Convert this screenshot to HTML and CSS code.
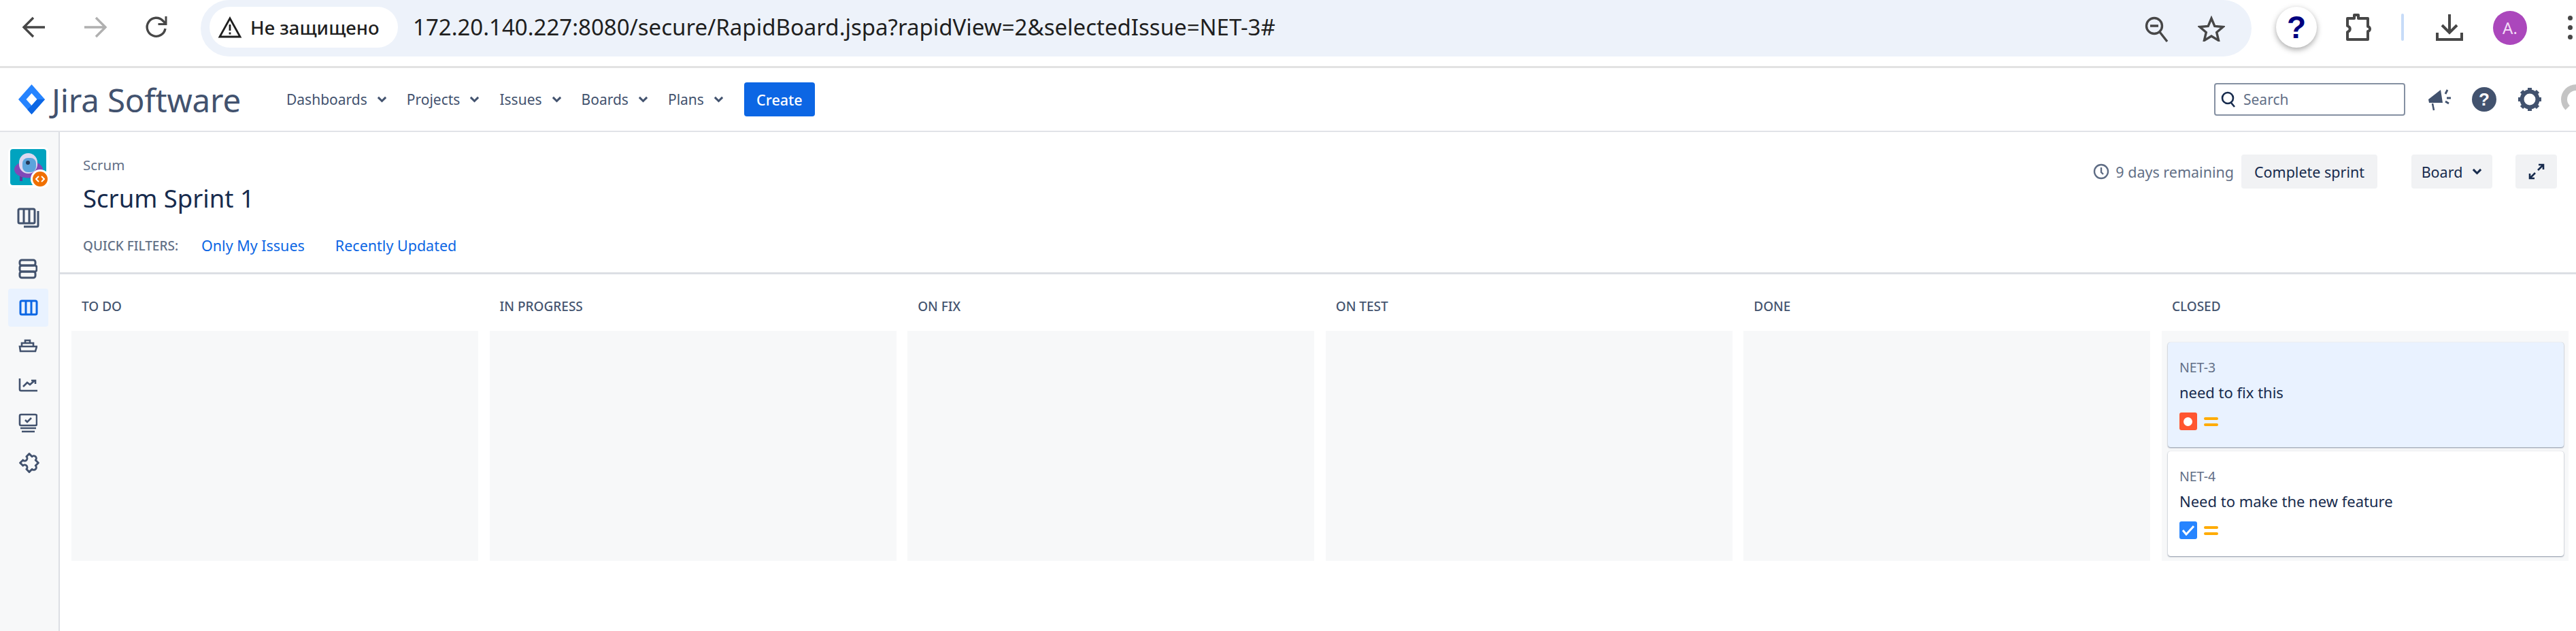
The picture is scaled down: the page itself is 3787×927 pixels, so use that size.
FILE: index.html
```html
<!DOCTYPE html>
<html lang="en">
<head>
    <meta charset="UTF-8">
    <meta name="viewport" content="width=device-width, initial-scale=1.0">
    <title>Scrum Sprint 1</title>
    <link rel="stylesheet" href="styles.css">
</head>
<body>

    <!-- browser toolbar -->
    <div class="chrome">
        <svg class="c-back" width="40" height="40" viewBox="0 0 40 40" fill="none" stroke="#474747" stroke-width="3.4"><path d="M36 20H6M19 6 5 20l14 14"/></svg>
        <svg class="c-forward" width="40" height="40" viewBox="0 0 40 40" fill="none" stroke="#b0b0b0" stroke-width="3.4"><path d="M4 20h30M21 6l14 14-14 14"/></svg>
        <svg class="c-reload" width="40" height="40" viewBox="0 0 40 40" fill="none" stroke="#474747" stroke-width="3.4"><path d="M33 22a13.500 13.500 0 1 1-3.500-11.500L34 15"/><path d="M34 4v11.500H22.500" stroke-width="3"/></svg>
        <div class="omnibox">
            <div class="security">
                <svg width="36" height="32" viewBox="0 0 36 32" fill="none" stroke="#1f1f1f" stroke-width="2.800"><path d="M18 3 3 30h30z"/><path d="M18 12v9M18 23.500v3"/></svg>
                <span>Не защищено</span>
            </div>
            <div class="url">172.20.140.227:8080/secure/RapidBoard.jspa?rapidView=2&amp;selectedIssue=NET-3#</div>
            <svg class="o-zoom" width="38" height="40" viewBox="0 0 38 40" fill="none" stroke="#474747" stroke-width="3.400"><circle cx="15" cy="15" r="11.500"/><path d="M9 15h12M23 24l11 14"/></svg>
            <svg class="o-star" width="40" height="38" viewBox="0 0 40 38" fill="none" stroke="#474747" stroke-width="3.400"><path d="m20 4 4.800 11.500 12.200 1-9.300 8 2.900 12L20 30l-10.600 6.500 2.900-12-9.300-8 12.200-1z"/></svg>
        </div>
        <div class="ext-help">?</div>
        <svg class="c-ext" width="40" height="42" viewBox="0 0 40 42" fill="none" stroke="#474747" stroke-width="4" stroke-linejoin="round"><path d="M3 8h10V3h6v5h14v12c4 0 4 7 0 7v12H3V28c5-2 5-7 0-9z"/></svg>
        <div class="c-divider"></div>
        <svg class="c-download" width="42" height="42" viewBox="0 0 42 42" fill="none" stroke="#474747" stroke-width="4"><path d="M21 1v26M10 17l11 11 11-11M3 28v10h36V28"/></svg>
        <div class="c-avatar">A.</div>
        <div class="c-dots"><i></i><i></i><i></i></div>
    </div>

    <!-- jira header -->
    <header class="topnav">
        <svg class="logo-mark" width="39" height="44" viewBox="0 0 39 44"><path d="M19.500 0 39 22 19.500 44 0 22z" fill="#2684ff"/><path d="M19.500 13 27.500 22l-8 9-8-9z" fill="#fff"/><path d="M27.500 22H39L19.500 44 13 36.700l6.500-5.700z" fill="#0c66e4"/></svg>
        <span class="logo-text">Jira Software</span>
        <nav class="menu">
            <a>Dashboards<svg class="chev" viewBox="0 0 12 8"><path d="m1.500 1.500 4.500 4.500 4.500-4.500"/></svg></a>
            <a>Projects<svg class="chev" viewBox="0 0 12 8"><path d="m1.500 1.500 4.500 4.500 4.500-4.500"/></svg></a>
            <a>Issues<svg class="chev" viewBox="0 0 12 8"><path d="m1.500 1.500 4.500 4.500 4.500-4.500"/></svg></a>
            <a>Boards<svg class="chev" viewBox="0 0 12 8"><path d="m1.500 1.500 4.500 4.500 4.500-4.500"/></svg></a>
            <a>Plans<svg class="chev" viewBox="0 0 12 8"><path d="m1.500 1.500 4.500 4.500 4.500-4.500"/></svg></a>
        </nav>
        <button class="create">Create</button>
        <div class="search">
            <svg width="22" height="26" viewBox="0 0 22 26" fill="none" stroke="#172b4d" stroke-width="2.600"><circle cx="10" cy="11" r="8"/><path d="m15 18 5 6"/></svg>
            <span>Search</span>
        </div>
        <svg class="h-mega" width="36" height="34" viewBox="0 0 36 34"><path d="M2 17 20 3l3 19H3z" fill="#42526e"/><path d="M8 23l2 10" stroke="#42526e" stroke-width="2.500"/><path d="M27 9l3-6M29 15h6M27 20l5 3" stroke="#42526e" stroke-width="2.800" fill="none"/></svg>
        <div class="h-help">?</div>
        <svg class="h-gear" width="36" height="36" viewBox="0 0 36 36" fill="none" stroke="#42526e"><circle cx="18" cy="18" r="11.500" stroke-width="6"/><path d="M18 1v6M18 29v6M1 18h6M29 18h6M6 6l4 4M26 26l4 4M6 30l4-4M26 10l4-4" stroke-width="6"/></svg>
        <div class="h-ring"></div>
    </header>

    <div class="page">
        <!-- project sidebar -->
        <aside class="sidebar">
            <div class="project-tile">
                <svg width="53" height="53" viewBox="0 0 53 53">
                    <rect width="53" height="53" rx="4" fill="#00a3bf"/>
                    <path d="M14 40h4v7h-4z" fill="#5e3a9e"/>
                    <ellipse cx="27" cy="30" rx="21" ry="12.500" fill="#8049b8"/>
                    <rect x="13" y="6" width="27" height="30" rx="13.500" fill="#ddd8f0"/>
                    <rect x="18" y="13" width="20" height="21" rx="8" fill="#5ba4dc"/>
                    <circle cx="26" cy="20" r="3" fill="#253858"/>
                </svg>
                <span class="project-badge">
                    <svg width="14" height="10" viewBox="0 0 14 10" fill="none" stroke="#fff" stroke-width="2"><path d="M5 1 1 5l4 4M9 1l4 4-4 4"/></svg>
                </span>
            </div>

            <svg class="side-icon i-stack" width="34" height="30" viewBox="0 0 34 30" fill="none" stroke="#42526e" stroke-width="3"><rect x="2" y="2" width="24" height="21" rx="2"/><path d="M10 2v21M18 2v21"/><path d="M31 5v21a2 2 0 0 1-2 2H10"/></svg>
            <svg class="side-icon i-backlog" width="28" height="30" viewBox="0 0 28 30" fill="none" stroke="#42526e" stroke-width="3"><rect x="2" y="2" width="23" height="8" rx="3"/><rect x="2" y="10" width="25" height="9" rx="3"/><rect x="2" y="19" width="23" height="9" rx="3"/></svg>
            <div class="side-active">
                <svg width="28" height="24" viewBox="0 0 28 24" fill="none" stroke="#0c66e4" stroke-width="3"><rect x="2" y="2" width="24" height="20" rx="2"/><path d="M10 2v20M18 2v20"/></svg>
            </div>
            <svg class="side-icon i-ship" width="28" height="20" viewBox="0 0 28 20" fill="none" stroke="#42526e" stroke-width="2.600"><path d="M2 11h25l-2 7H3z"/><path d="M5 11V6h17v5M10 6V2h7v4"/></svg>
            <svg class="side-icon i-chart" width="28" height="20" viewBox="0 0 28 20" fill="none" stroke="#42526e" stroke-width="2.600"><path d="M2 0v16a2 2 0 0 0 2 2h24"/><path d="m7 12 6-6 4 3 7-6M19 3h6v5"/></svg>
            <svg class="side-icon i-check" width="28" height="29" viewBox="0 0 28 29" fill="none" stroke="#42526e" stroke-width="2.600"><rect x="2" y="2" width="25" height="16" rx="2"/><path d="m10 10 3 3 6-6M3 22h23M5 27h19"/></svg>
            <svg class="side-icon i-puzzle" width="30" height="30" viewBox="-15 -15 30 30" fill="none" stroke="#42526e" stroke-width="2.800" stroke-linejoin="round"><path transform="rotate(45) scale(1.05)" d="M-9-9h5.500a3.500 3.500 0 1 1 7 0H9v5.500a3.500 3.500 0 1 1 0 7V9H3.500a3.500 3.500 0 1 0-7 0H-9V3.500a3.500 3.500 0 1 0 0-7z"/></svg>
        </aside>

        <main class="content">
            <section class="board-head">
                <div class="head-top">
                    <div>
                        <div class="crumb">Scrum</div>
                        <h1>Scrum Sprint 1</h1>
                    </div>
                    <div class="head-actions">
                        <svg width="24" height="24" viewBox="0 0 24 24" fill="none" stroke="#5e6c84" stroke-width="2.400"><circle cx="12" cy="12" r="10"/><path d="M12 6v7l3 3"/></svg>
                        <span class="remaining">9 days remaining</span>
                        <button class="btn btn-complete">Complete sprint</button>
                        <button class="btn btn-board">Board<svg class="chev dark" viewBox="0 0 12 8"><path d="m1.500 1.500 4.500 4.500 4.500-4.500"/></svg></button>
                        <button class="btn btn-expand">
                            <svg width="24" height="24" viewBox="0 0 24 24" fill="none" stroke="#172b4d" stroke-width="2.600"><path d="m14 10 8-8M15 2h7v7M10 14l-8 8M2 15v7h7"/></svg>
                        </button>
                    </div>
                </div>
                <div class="filters">
                    <span class="filters-label">QUICK FILTERS:</span>
                    <a>Only My Issues</a>
                    <a>Recently Updated</a>
                </div>
            </section>

            <section class="board">
                <div class="col-title">TO DO</div>
                <div class="col-title">IN PROGRESS</div>
                <div class="col-title">ON FIX</div>
                <div class="col-title">ON TEST</div>
                <div class="col-title">DONE</div>
                <div class="col-title">CLOSED</div>

                <div class="col"></div>
                <div class="col"></div>
                <div class="col"></div>
                <div class="col"></div>
                <div class="col"></div>
                <div class="col">
                    <article class="card selected">
                        <div class="card-key">NET-3</div>
                        <div class="card-summary">need to fix this</div>
                        <div class="card-meta">
                            <span class="type bug"><i></i></span>
                            <span class="prio"><i></i><i></i></span>
                        </div>
                    </article>
                    <article class="card">
                        <div class="card-key">NET-4</div>
                        <div class="card-summary">Need to make the new feature</div>
                        <div class="card-meta">
                            <span class="type task"><svg width="20" height="16" viewBox="0 0 20 16" fill="none" stroke="#fff" stroke-width="3"><path d="m2 8 5 6L18 2"/></svg></span>
                            <span class="prio"><i></i><i></i></span>
                        </div>
                    </article>
                </div>
            </section>
        </main>
    </div>

</body>
</html>
```

FILE: styles.css
```css
* { box-sizing: border-box; }
html, body { height: 100%; }
body {
    margin: 0;
    overflow: hidden;
    background: #fff;
    color: #172b4d;
    font-family: "Noto Sans", "Open Sans", sans-serif;
    display: flex;
    flex-direction: column;
}
button { font-family: inherit; border: none; cursor: pointer; }

/* browser toolbar */
.chrome {
    height: 100px;
    flex: none;
    display: flex;
    align-items: flex-start;
    background: #fff;
    border-bottom: 3px solid #e2e2e2;
}
.chrome > svg, .chrome > div { flex: none; }
.c-back { margin: 20px 0 0 30px; }
.c-forward { margin: 20px 0 0 50px; }
.c-reload { margin: 20px 0 0 50px; }
.omnibox {
    width: 3015px;
    height: 83px;
    margin-left: 45px;
    padding: 10px 0 0 13px;
    background: #edf2fa;
    border-radius: 42px;
    display: flex;
    align-items: flex-start;
}
.security {
    flex: none;
    width: 277px;
    height: 60px;
    padding-left: 12px;
    background: #fff;
    border-radius: 30px;
    display: flex;
    align-items: center;
    gap: 12px;
    font-size: 27.500px;
    font-weight: 500;
    color: #1f1f1f;
    white-space: nowrap;
}
.url {
    flex: none;
    width: 2545px;
    margin-left: 22px;
    font-size: 33px;
    line-height: 60px;
    color: #1f1f1f;
    white-space: nowrap;
}
.o-zoom { margin: 13px 0 0 0; flex: none; }
.o-star { margin: 13px 0 0 41px; flex: none; }
.ext-help {
    width: 60px;
    height: 60px;
    margin: 10px 0 0 36px;
    border-radius: 50%;
    background: #fff;
    box-shadow: 0 3px 8px rgba(0, 0, 0, .35);
    color: #00007f;
    font: bold 46px/60px "Liberation Sans", sans-serif;
    text-align: center;
}
.c-ext { margin: 19px 0 0 42px; }
.c-divider {
    width: 4px;
    height: 40px;
    margin: 20px 0 0 42px;
    background: #c7dcf8;
    border-radius: 2px;
}
.c-download { margin: 20px 0 0 46px; }
.c-avatar {
    width: 50px;
    height: 50px;
    margin: 16px 0 0 43px;
    border-radius: 50%;
    background: #ab47bc;
    color: #f3dcf7;
    font-size: 24px;
    line-height: 50px;
    text-align: center;
}
.c-dots {
    margin: 23px 0 0 60px;
    display: flex;
    flex-direction: column;
    gap: 7px;
}
.c-dots i {
    width: 7px;
    height: 7px;
    border-radius: 50%;
    background: #474747;
}

/* jira header */
.topnav {
    height: 94px;
    flex: none;
    padding-left: 27px;
    display: flex;
    align-items: center;
    background: #fff;
    border-bottom: 2px solid #e1e3e8;
    overflow: hidden;
}
.logo-mark { flex: none; }
.logo-text {
    flex: none;
    width: 345px;
    margin-left: 10px;
    font-size: 47.500px;
    letter-spacing: -.2px;
    color: #42526e;
    white-space: nowrap;
}
.menu { display: flex; gap: 29px; }
.menu a {
    display: flex;
    align-items: center;
    gap: 14px;
    font-size: 21px;
    color: #42526e;
}
.chev {
    width: 15px;
    height: 10px;
    fill: none;
    stroke: #42526e;
    stroke-width: 2.400;
}
.chev.dark { stroke: #172b4d; }
.create {
    flex: none;
    width: 104px;
    height: 50px;
    margin-left: 30px;
    background: #0c66e4;
    color: #fff;
    border-radius: 4px;
    font-size: 21.500px;
    font-weight: 500;
}
.search {
    flex: none;
    width: 281px;
    height: 48px;
    margin-left: auto;
    padding-left: 8px;
    border: 2px solid #8590a2;
    border-radius: 4px;
    display: flex;
    align-items: center;
    gap: 11px;
    font-size: 21px;
    color: #626f86;
}
.h-mega { margin-left: 32px; flex: none; }
.h-help {
    flex: none;
    width: 36px;
    height: 36px;
    margin-left: 30px;
    border-radius: 50%;
    background: #42526e;
    color: #fff;
    font: bold 26px/36px "Liberation Sans", sans-serif;
    text-align: center;
}
.h-gear { flex: none; margin-left: 31px; }
.h-ring {
    flex: none;
    width: 44px;
    height: 44px;
    margin: 0 -22px 0 28px;
    border-radius: 50%;
    border: 9px solid #c4c4c4;
    border-bottom-color: transparent;
}

/* layout below the header */
.page { flex: 1; display: flex; min-height: 0; }
.sidebar {
    width: 88px;
    flex: none;
    background: #f7f8f9;
    border-right: 2px solid #dcdfe4;
    display: flex;
    flex-direction: column;
    align-items: flex-start;
}
.project-tile {
    position: relative;
    margin: 22px 0 0 12px;
    width: 60px;
    height: 60px;
    padding: 3px;
    background: #fff;
    border-radius: 8px;
}
.project-tile > svg { display: block; }
.project-badge {
    position: absolute;
    right: -1px;
    bottom: -1px;
    width: 28px;
    height: 28px;
    border: 3px solid #fff;
    border-radius: 50%;
    background: #f07000;
    display: flex;
    align-items: center;
    justify-content: center;
}
.side-icon { display: block; flex: none; }
.i-stack { margin: 29px 0 0 25px; }
.i-backlog { margin: 45px 0 0 27px; }
.side-active {
    width: 59px;
    height: 56px;
    margin: 14px 0 0 12px;
    background: #e9f2ff;
    border-radius: 4px;
    display: flex;
    align-items: center;
    justify-content: center;
}
.i-ship { margin: 18px 0 0 27px; }
.i-chart { margin: 38px 0 0 27px; }
.i-check { margin: 31px 0 0 27px; }
.i-puzzle { margin: 29px 0 0 28px; }

.content { flex: 1; min-width: 0; }

.board-head {
    height: 209px;
    padding: 0 28px 0 34px;
    border-bottom: 3px solid #dcdfe4;
}
.head-top {
    display: flex;
    justify-content: space-between;
    align-items: flex-start;
}
.crumb {
    margin-top: 34px;
    font-size: 20.500px;
    line-height: 28px;
    color: #626f86;
}
h1 {
    margin: 10px 0 0;
    font-size: 36.500px;
    font-weight: 400;
    line-height: 50px;
    color: #172b4d;
}
.head-actions {
    margin-top: 33px;
    display: flex;
    align-items: center;
}
.remaining {
    margin-left: 9px;
    font-size: 21.500px;
    color: #626f86;
}
.btn {
    height: 50px;
    background: #f1f2f4;
    border-radius: 4px;
    color: #172b4d;
    font-size: 21.500px;
    display: flex;
    align-items: center;
    justify-content: center;
}
.btn-complete { width: 200px; margin-left: 11px; }
.btn-board { width: 119px; margin-left: 50px; gap: 14px; }
.btn-expand { width: 61px; margin-left: 34px; }
.filters {
    margin-top: 30px;
    display: flex;
    align-items: center;
    font-size: 21.500px;
}
.filters-label {
    width: 174px;
    font-size: 19px;
    font-weight: 500;
    color: #626f86;
}
.filters a { margin-right: 45px; color: #0c66e4; }

/* board columns */
.board {
    padding: 0 11px 0 17px;
    display: grid;
    grid-template-columns: repeat(6, 1fr);
    grid-template-rows: 83px 338px;
    column-gap: 16.500px;
}
.col-title {
    padding: 32px 0 0 15px;
    font-size: 19px;
    font-weight: 500;
    line-height: 30px;
    color: #44546f;
}
.col {
    background: #f7f8f9;
    padding: 17px 7px 0 9px;
    display: flex;
    flex-direction: column;
    gap: 6px;
}
.card {
    height: 154px;
    padding: 26px 17px 0;
    background: #fff;
    border-radius: 4px;
    box-shadow: 0 1px 2px rgba(9, 30, 66, .45), 0 0 1px rgba(9, 30, 66, .2);
}
.card.selected { background: #e9f2ff; }
.card-key {
    font-size: 19.500px;
    line-height: 22px;
    color: #626f86;
}
.card-summary {
    margin-top: 10px;
    font-size: 22px;
    line-height: 30px;
    color: #172b4d;
}
.card-meta {
    margin-top: 15px;
    display: flex;
    align-items: center;
    gap: 10px;
}
.type {
    width: 26px;
    height: 26px;
    border-radius: 3px;
    display: flex;
    align-items: center;
    justify-content: center;
}
.type.bug { background: #ff5630; }
.type.bug i {
    width: 13px;
    height: 13px;
    border-radius: 50%;
    background: #fff;
}
.type.task { background: #2684ff; }
.prio {
    width: 21px;
    display: flex;
    flex-direction: column;
    gap: 5px;
}
.prio i {
    height: 4px;
    border-radius: 2px;
    background: #ffab00;
}
```
